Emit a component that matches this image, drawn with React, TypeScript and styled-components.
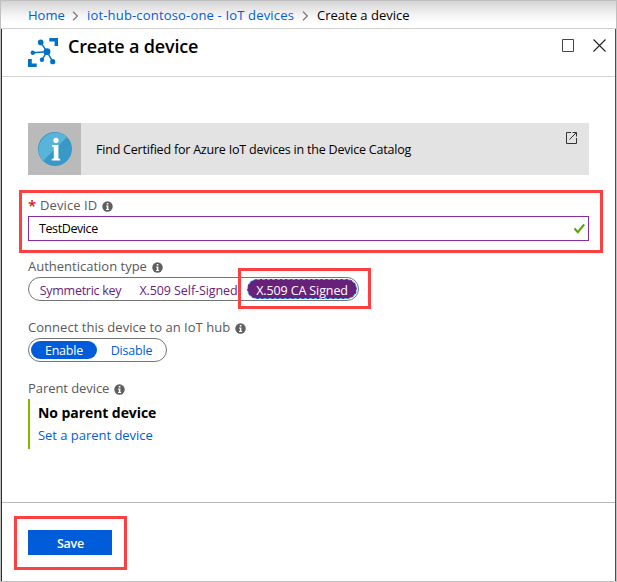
import React from "react";
import styled, { createGlobalStyle } from "styled-components";

const GlobalStyle = createGlobalStyle`
  *, *::before, *::after { box-sizing: border-box; }
  body { margin: 0; background: #fff; overflow: hidden; }
  button, input { font: inherit; }
  svg { display: block; flex: none; }
`;

const Window = styled.div`
  width: 617px;
  height: 582px;
  display: flex;
  flex-direction: column;
  border: 1px solid #c0c0c0;
  background: #fff;
  color: #000;
  font: 13px/18px "Open Sans", "Noto Sans", sans-serif;
`;

const Text = styled.span<{ $track?: number; $size?: number }>`
  white-space: nowrap;
  letter-spacing: ${(p) => p.$track ?? 0}px;
  font-size: ${(p) => p.$size ?? 13}px;
`;

const Breadcrumb = styled.nav`
  height: 28px;
  flex: none;
  display: flex;
  align-items: flex-start;
  padding: 5px 0 0 27px;
  border-bottom: 1px solid #d0d0d0;
  background: linear-gradient(#d4d4d4, #f4f4f4 14px, #fff 22px);
`;

const Crumb = styled.a<{ $width: number }>`
  width: ${(p) => p.$width}px;
  color: #015cda;
`;

const CurrentCrumb = styled.span`
  color: #000;
`;

const Separator = styled.svg`
  margin: 5px 8px 0 8px;
`;

const Blade = styled.main`
  flex: 1;
  display: flex;
  flex-direction: column;
  border-right: 1px solid #1c5f86;
  border-left: 1px solid #2b2b2b;
`;

const BladeHeader = styled.header`
  height: 48px;
  flex: none;
  display: flex;
  align-items: flex-start;
  border-bottom: 1px solid #d2d2d2;
  padding: 9px 8px 0 26px;
`;

const Title = styled.h1`
  margin: -5px auto 0 10px;
  font-size: 18px;
  line-height: 26px;
  font-weight: 600;
`;

const WindowButtons = styled.div`
  display: flex;
  gap: 17px;
`;

const Body = styled.section`
  flex: 1;
  padding: 46px 25px 0 26px;
`;

const Banner = styled.div`
  height: 52px;
  width: 561px;
  display: flex;
  align-items: center;
  background: #e3e3e3;
  margin-bottom: 21px;
`;

const BannerIcon = styled.div`
  width: 53px;
  height: 52px;
  display: flex;
  align-items: center;
  justify-content: center;
  background: #bababa;
  margin-right: 15px;
`;

const BannerMessage = styled.p`
  margin: 0;
`;

const BannerLink = styled.div`
  align-self: flex-start;
  margin: 8px 11px 0 auto;
`;

const Field = styled.div<{ $gap: number }>`
  position: relative;
  width: 561px;
  margin-bottom: ${(p) => p.$gap}px;
`;

const Label = styled.label`
  height: 20px;
  display: flex;
  align-items: flex-start;
  color: #595959;

  svg { margin: 5px 0 0 5px; }
`;

const Required = styled.span`
  width: 12px;
  color: #e00b1c;
  font-weight: 600;
  font-size: 15px;
`;

const InputBox = styled.div`
  height: 25px;
  display: flex;
  align-items: center;
  justify-content: space-between;
  padding: 1px 3px 0 10px;
  border: 1px solid #8a2da5;

  svg { margin-bottom: 2px; }
`;

const Toggle = styled.div<{ $width: number }>`
  width: ${(p) => p.$width}px;
  height: 24px;
  display: flex;
  align-items: center;
  border: 1px solid #757575;
  border-radius: 12px;
`;

const Option = styled.button<{
  $width: number;
  $color: string;
  $on?: boolean;
  $focused?: boolean;
  $drop?: number;
  $indent?: number;
}>`
  width: ${(p) => p.$width}px;
  height: ${(p) => (p.$focused ? 20 : 18)}px;
  flex: none;
  display: flex;
  align-items: center;
  justify-content: center;
  margin-left: ${(p) => p.$indent ?? 0}px;
  padding: ${(p) => p.$drop ?? 0}px 0 0;
  border: ${(p) => (p.$focused ? "1px dashed #38c5f5" : "0")};
  border-radius: 10px;
  background: ${(p) => (p.$on ? p.$color : "transparent")};
  color: ${(p) => (p.$on ? "#fff" : p.$color)};
`;

const ParentCard = styled.div`
  height: 50px;
  border-left: 2px solid #7fba00;
  padding: 4px 0 0 8px;
  display: flex;
  flex-direction: column;
`;

const ParentName = styled.strong`
  height: 23px;
  line-height: 20px;
  font-weight: 700;
`;

const Link = styled.a`
  color: #015cda;
`;

const Footer = styled.footer`
  position: relative;
  height: 79px;
  flex: none;
  border-top: 1px solid #b9b9b9;
  padding: 27px 0 0 26px;
`;

const SaveButton = styled.button`
  width: 84px;
  height: 25px;
  display: flex;
  justify-content: center;
  padding: 5px 0 0 1px;
  border: 0;
  background: #015cda;
  color: #fff;
  font-weight: 600;
`;

const Highlight = styled.div<{ $left: number; $top: number; $width: number; $height: number }>`
  position: absolute;
  left: ${(p) => p.$left}px;
  top: ${(p) => p.$top}px;
  width: ${(p) => p.$width}px;
  height: ${(p) => p.$height}px;
  border: 3px solid #ff4040;
  pointer-events: none;
`;

const Chevron = () => (
  <Separator width="7" height="10" viewBox="0 0 7 10" fill="none" stroke="#777" strokeWidth="1.2">
    <path d="M1 .8 5.4 5 1 9.2" />
  </Separator>
);

const IotHubIcon = () => (
  <svg width="30" height="30" viewBox="0 0 30 30" fill="#0072c6">
    <path d="M21.3 0H30v8h-3.4V3.4h-5.3zM0 21h3.8v4.6h4.9V29H0z" />
    <path d="M12.7 4.3 19 13.7M4.7 14.7l14.3-1M14 21.7l5-8M24.7 23.7l-5.7-10" stroke="#0072c6" strokeWidth="1.4" />
    <circle cx="12.7" cy="4.4" r="2.8" />
    <circle cx="19" cy="13.7" r="3.4" />
    <circle cx="4.8" cy="14.7" r="2.2" />
    <circle cx="14" cy="21.7" r="2.2" />
    <circle cx="24.7" cy="23.7" r="2.6" />
  </svg>
);

const InfoDot = () => (
  <svg width="11" height="11" viewBox="0 0 11 11">
    <circle cx="5.5" cy="5.5" r="5.2" fill="#5f5f5f" />
    <path d="M4.8 2h1.6v1.5H4.8zM4.1 4.5h2.3v3.4h.7v1H4v-1h.8V5.4h-.7z" fill="#fff" />
  </svg>
);

const InfoBadge = () => (
  <svg width="34" height="34" viewBox="0 0 34 34">
    <circle cx="17" cy="17" r="17" fill="#3999c6" />
    <path d="M5 29A17 17 0 0 1 29 5z" fill="#59b4d9" />
    <circle cx="18" cy="8.3" r="2.6" fill="#fff" />
    <path d="M14 13h6.4v13.2l1.8.8v1.5h-8.4V27l2-.8V15.5L14 14.6z" fill="#fff" />
  </svg>
);

export default function App() {
  const purple = "#68217a";
  const blue = "#015cda";
  return (
    <>
      <GlobalStyle />
      <Window>
        <Breadcrumb>
          <Crumb $width={36}><Text>Home</Text></Crumb>
          <Chevron />
          <Crumb $width={207}><Text $track={0.17}>iot-hub-contoso-one - IoT devices</Text></Crumb>
          <Chevron />
          <CurrentCrumb><Text>Create a device</Text></CurrentCrumb>
        </Breadcrumb>
        <Blade>
          <BladeHeader>
            <IotHubIcon />
            <Title><Text $size={18} $track={-0.17}>Create a device</Text></Title>
            <WindowButtons>
              <svg width="14" height="15" viewBox="0 0 14 15" fill="none" stroke="#444">
                <path d="M1.5 1.5h11v12h-11z" />
              </svg>
              <svg width="15" height="15" viewBox="0 0 15 15" fill="none" stroke="#222" strokeWidth="1.1">
                <path d="m1.5 1.5 12 12m0-12-12 12" />
              </svg>
            </WindowButtons>
          </BladeHeader>
          <Body>
            <Banner>
              <BannerIcon><InfoBadge /></BannerIcon>
              <BannerMessage>
                <Text $size={12.5} $track={-0.21}>Find Certified for Azure IoT devices in the Device Catalog</Text>
              </BannerMessage>
              <BannerLink>
                <svg width="13" height="14" viewBox="0 0 13 14" fill="none" stroke="#333">
                  <path d="M6 1.5H1.5v11h10V7M7.5 1.5h4v4M11.3 1.7 4.5 8.5" />
                </svg>
              </BannerLink>
            </Banner>
            <Field $gap={16}>
              <Label><Required>*</Required><Text $track={0.1}>Device ID</Text><InfoDot /></Label>
              <InputBox>
                <Text $size={12.5} $track={-0.4}>TestDevice</Text>
                <svg width="12" height="11" viewBox="0 0 12 11" fill="none" stroke="#57a300" strokeWidth="2">
                  <path d="m1.5 5.5 3.3 3.7 6.4-7.7" />
                </svg>
              </InputBox>
              <Highlight $left={-9} $top={-6} $width={584} $height={63} />
            </Field>
            <Field $gap={17}>
              <Label><Text>Authentication type</Text><InfoDot /></Label>
              <Toggle $width={331}>
                <Option $width={103} $color={purple} $drop={4}><Text $size={12.5} $track={-0.27}>Symmetric key</Text></Option>
                <Option $width={113} $color={purple} $drop={4}><Text $size={12.5} $track={-0.08}>X.509 Self-Signed</Text></Option>
                <Option $width={110} $indent={2} $color={purple} $drop={4} $on $focused>
                  <Text $size={12.5} $track={-0.11}>X.509 CA Signed</Text>
                </Option>
              </Toggle>
              <Highlight $left={210} $top={11} $width={133} $height={41} />
            </Field>
            <Field $gap={17}>
              <Label><Text $track={0.03}>Connect this device to an IoT hub</Text><InfoDot /></Label>
              <Toggle $width={139}>
                <Option $width={66} $indent={2} $color={blue} $drop={2} $on><Text $size={12.5} $track={-0.2}>Enable</Text></Option>
                <Option $width={69} $color={blue} $drop={2}><Text $size={12.5} $track={-0.2}>Disable</Text></Option>
              </Toggle>
            </Field>
            <Field $gap={0}>
              <Label><Text $track={-0.07}>Parent device</Text><InfoDot /></Label>
              <ParentCard>
                <ParentName><Text $size={14} $track={-0.07}>No parent device</Text></ParentName>
                <Link><Text $track={-0.03}>Set a parent device</Text></Link>
              </ParentCard>
            </Field>
          </Body>
          <Footer>
            <SaveButton><Text $size={12.5} $track={-0.2}>Save</Text></SaveButton>
            <Highlight $left={12} $top={13} $width={113} $height={54} />
          </Footer>
        </Blade>
      </Window>
    </>
  );
}
